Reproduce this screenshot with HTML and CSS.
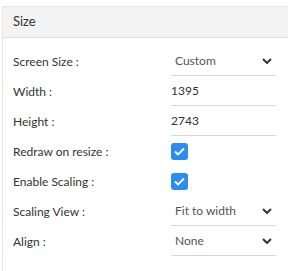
FILE: index.html
```html
<!DOCTYPE html>
<html lang="en">

<head>
    <meta charset="UTF-8">
    <title>Size</title>
    <link rel="stylesheet" href="styles.css">
</head>

<body>
    <div class="panel">
        <div class="panel-header">Size</div>
        <div class="panel-body">
            <div class="row">
                <label>Screen Size :</label>
                <div class="field select">
                    <span>Custom</span>
                    <svg class="chevron" width="10" height="6" viewBox="0 0 10 6"><path d="M1 1l4 4 4-4" fill="none" stroke="#333" stroke-width="2"/></svg>
                </div>
            </div>
            <div class="row">
                <label>Width :</label>
                <div class="field input">1395</div>
            </div>
            <div class="row">
                <label>Height :</label>
                <div class="field input">2743</div>
            </div>
            <div class="row">
                <label>Redraw on resize :</label>
                <div class="check">
                    <svg width="11" height="9" viewBox="0 0 11 9"><path d="M1 4.5l3 3 6-6" fill="none" stroke="#fff" stroke-width="1.8"/></svg>
                </div>
            </div>
            <div class="row">
                <label>Enable Scaling :</label>
                <div class="check">
                    <svg width="11" height="9" viewBox="0 0 11 9"><path d="M1 4.5l3 3 6-6" fill="none" stroke="#fff" stroke-width="1.8"/></svg>
                </div>
            </div>
            <div class="row">
                <label>Scaling View :</label>
                <div class="field select">
                    <span>Fit to width</span>
                    <svg class="chevron" width="10" height="6" viewBox="0 0 10 6"><path d="M1 1l4 4 4-4" fill="none" stroke="#333" stroke-width="2"/></svg>
                </div>
            </div>
            <div class="row">
                <label>Align :</label>
                <div class="field select">
                    <span>None</span>
                    <svg class="chevron" width="10" height="6" viewBox="0 0 10 6"><path d="M1 1l4 4 4-4" fill="none" stroke="#333" stroke-width="2"/></svg>
                </div>
            </div>
        </div>
    </div>
</body>

</html>
```

FILE: styles.css
```css
body {
    font-family: 'Lato', sans-serif;
    background-color: #fff;
    margin: 0;
    padding: 6px 0 0 2px;
    color: #333;
    font-size: 12px;
}

.panel {
    border-left: 1px solid #e4e4e4;
    border-top: 1px solid #e4e4e4;
    height: 265px;
}

.panel-header {
    background-color: #f4f4f4;
    border-bottom: 1px solid #dcdcdc;
    height: 30px;
    line-height: 29px;
    padding-left: 10px;
    font-size: 13px;
}

.panel-body {
    padding: 8px 10px 0 10px;
}

.row {
    display: flex;
    align-items: center;
    height: 30px;
}

label {
    width: 158px;
}

.field {
    width: 105px;
    height: 29px;
    border-bottom: 1px solid #d8d8d8;
    display: flex;
    align-items: center;
    justify-content: space-between;
    box-sizing: border-box;
    padding: 0 4px 0 0;
}

.select span {
    color: #555;
    padding-left: 4px;
}

.check {
    width: 17px;
    height: 17px;
    background-color: #2d8cf0;
    border-radius: 3px;
    display: flex;
    align-items: center;
    justify-content: center;
}
```
